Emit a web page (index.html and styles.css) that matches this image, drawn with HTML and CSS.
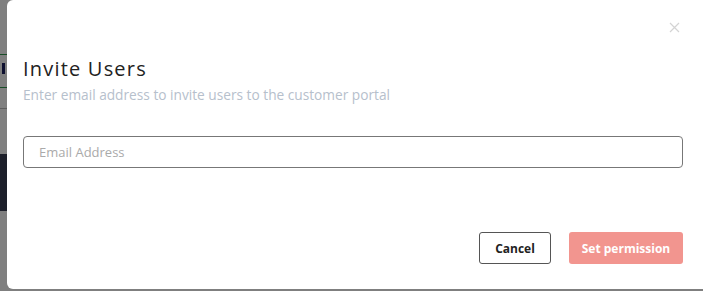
FILE: index.html
```html
<!DOCTYPE html>
<html lang="en">
<head>
    <meta charset="UTF-8">
    <title>Invite Users</title>
    <link rel="stylesheet" href="styles.css">
</head>
<body>
    <div class="page">
        <div class="page-row green"></div>
        <div class="page-row mark"></div>
        <div class="page-row green"></div>
        <div class="page-row line"></div>
        <div class="page-block"></div>
    </div>
    <div class="overlay"></div>

    <div class="modal">
        <button class="close" aria-label="Close">
            <svg width="11" height="11" viewBox="0 0 11 11">
                <path d="M1 1 L10 10 M10 1 L1 10" stroke="#d4d4d4" stroke-width="1.2" fill="none"/>
            </svg>
        </button>
        <h2 class="title">Invite Users</h2>
        <p class="subtitle">Enter email address to invite users to the customer portal</p>
        <input type="text" class="email" placeholder="Email Address">
        <div class="actions">
            <button class="btn btn-cancel">Cancel</button>
            <button class="btn btn-primary">Set permission</button>
        </div>
    </div>
</body>
</html>
```

FILE: styles.css
```css
html, body {
    margin: 0;
    height: 100%;
    overflow: hidden;
}
body {
    font-family: "Open Sans", "Liberation Sans", sans-serif;
    background: #fff;
    position: relative;
}
.page {
    padding-top: 54px;
}
.page-row.green {
    height: 1px;
    background: #2e9a4c;
}
.page-row.mark {
    height: 24px;
    padding-top: 8px;
}
.page-row.mark::before {
    content: "";
    display: block;
    margin-left: 2px;
    width: 3px;
    height: 11px;
    background: #1b1f5e;
}
.page-row.line {
    height: 1px;
    margin-top: 20px;
    background: #bbb;
}
.page-block {
    margin-top: 45px;
    height: 57px;
    background: #3b3f55;
}
.overlay {
    position: absolute;
    inset: 0;
    background: rgba(0, 0, 0, 0.5);
}
.modal {
    position: absolute;
    top: 0;
    left: 7px;
    width: 720px;
    height: 289px;
    box-sizing: border-box;
    background: #fff;
    border-radius: 6px;
    padding: 56px 0 0 16px;
}
.close {
    position: absolute;
    top: 22px;
    left: 662px;
    padding: 0;
    border: 0;
    background: none;
    line-height: 0;
}
.title {
    margin: 0;
    font-size: 20px;
    font-weight: 400;
    color: #222;
    line-height: 26px;
    letter-spacing: 1.2px;
}
.subtitle {
    margin: 4px 0 0;
    font-size: 13.7px;
    color: #b6c0cc;
    line-height: 18px;
}
.email {
    display: block;
    margin-top: 32px;
    width: 660px;
    height: 32px;
    box-sizing: border-box;
    border: 1px solid #777;
    border-radius: 4px;
    padding: 0 15px;
    font-family: inherit;
    font-size: 13px;
}
.email::placeholder {
    color: #aaa;
}
.actions {
    display: flex;
    justify-content: flex-end;
    gap: 18px;
    width: 660px;
    margin-top: 64px;
}
.btn {
    height: 32px;
    border-radius: 3px;
    font-family: inherit;
    font-size: 12px;
    font-weight: 700;
    cursor: pointer;
}
.btn-cancel {
    width: 72px;
    background: #fff;
    border: 1px solid #555;
    color: #222;
}
.btn-primary {
    width: 114px;
    background: #f2958f;
    border: 0;
    color: #fff;
}
```
